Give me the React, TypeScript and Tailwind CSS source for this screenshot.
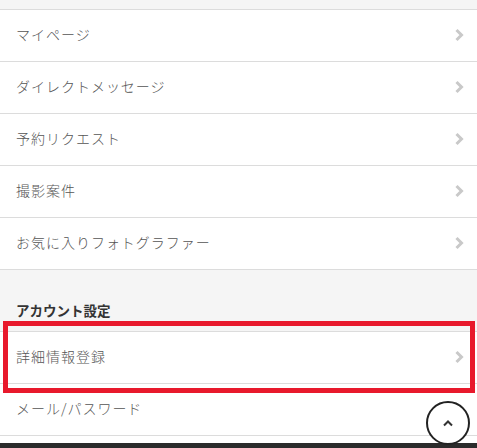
const mainItems = ["マイページ", "ダイレクトメッセージ", "予約リクエスト", "撮影案件", "お気に入りフォトグラファー"]
const accountItems = ["詳細情報登録", "メール/パスワード"]

function Chevron() {
    return (
        <svg width="10" height="14" viewBox="0 0 10 14" fill="none" className="shrink-0">
            <path d="M2.5 2 7.5 7l-5 5" stroke="#c9c9c9" strokeWidth="3" />
        </svg>
    )
}

function MenuRow({ label, last }: { label: string; last?: boolean }) {
    return (
        <li className="flex h-[52px] items-center justify-between border-b border-[#dcdcdc] bg-white pb-[2px] pl-4 pr-[13px]">
            <span className="text-[14px] font-light tracking-[0.07em] text-[#555]">{label}</span>
            {!last && <Chevron />}
        </li>
    )
}

export default function App() {
    return (
        <div
            className="relative h-[448px] w-[477px] overflow-hidden bg-[#f5f5f5]"
            style={{ fontFamily: '"Noto Sans CJK JP", "Noto Sans", sans-serif' }}
        >
            <div className="h-[9px]" />
            <ul className="border-t border-[#dcdcdc]">
                {mainItems.map((item) => (
                    <MenuRow key={item} label={item} />
                ))}
            </ul>

            <div className="h-[61px] px-4 pt-[30px]">
                <h2 className="text-[13.5px] font-bold leading-5 text-[#333]">アカウント設定</h2>
            </div>

            <ul className="border-t border-[#dcdcdc]">
                {accountItems.map((item, i) => (
                    <MenuRow key={item} label={item} last={i === accountItems.length - 1} />
                ))}
            </ul>
            <div className="h-[7px] bg-white" />
            <div className="h-[10px] bg-[#2b2b2b]" />

            {/* highlight */}
            <div className="pointer-events-none absolute left-[3px] top-[321px] h-[72px] w-[472px] border-[5px] border-[#e8192c]" />

            {/* back to top */}
            <button className="absolute left-[426px] top-[401px] flex h-[44px] w-[44px] items-center justify-center rounded-full border-2 border-[#222] bg-white">
                <svg width="12" height="8" viewBox="0 0 12 8" fill="none">
                    <path d="M2 6.5 6 2.5l4 4" stroke="#333" strokeWidth="2" />
                </svg>
            </button>
        </div>
    )
}
